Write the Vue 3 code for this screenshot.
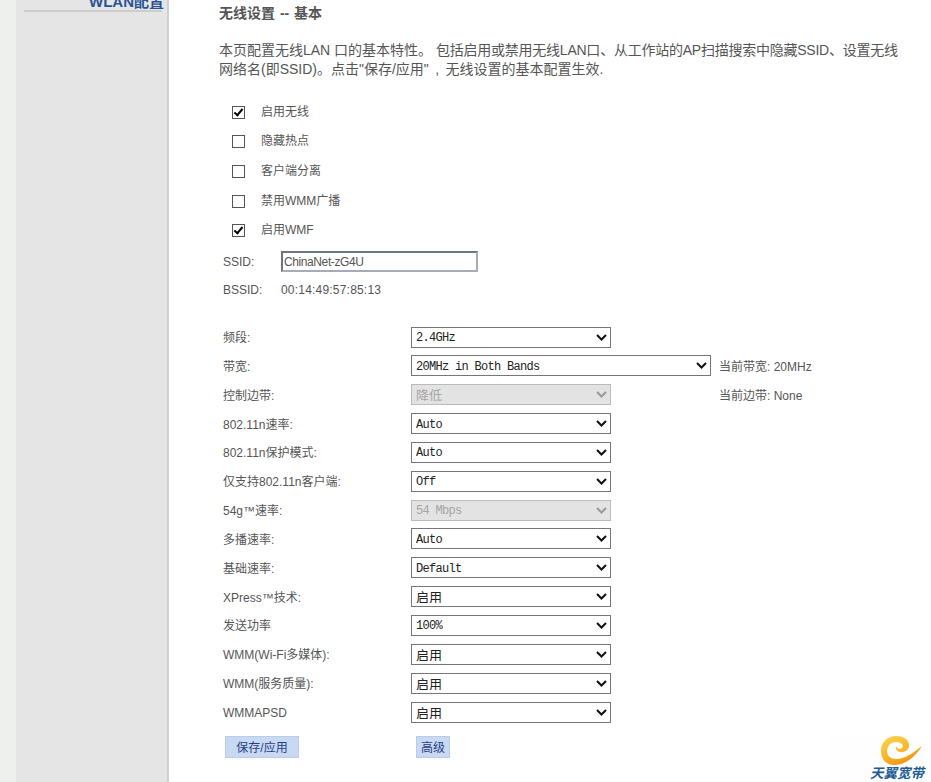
<template>
  <div class="page">
    <div class="strip"></div>
    <aside class="sidebar">
      <div class="menu-item"><span>WLAN配置</span></div>
    </aside>
    <main class="content">
      <h1 class="title">无线设置 -- 基本</h1>
      <p class="intro">
        本页配置无线LAN 口的基本特性。 <span class="tight">包括启用或禁用无线LAN口、从工作站的AP扫描搜索中隐藏SSID、设置无线</span><br /><span class="line2">网络名(即SSID)。点击"保存/应用" , 无线设置的基本配置生效.</span>
      </p>

      <div class="checks">
        <label v-for="item in checks" :key="item.label" class="check">
          <input type="checkbox" :checked="item.on" />
          <span>{{ item.label }}</span>
        </label>
      </div>

      <div class="ssid-row">
        <span class="ssid-label">SSID:</span>
        <input class="ssid-input" type="text" value="ChinaNet-zG4U" />
      </div>
      <div class="bssid-row">
        <span class="ssid-label">BSSID:</span>
        <span class="mac">00:14:49:57:85:13</span>
      </div>

      <div class="form">
        <div v-for="row in rows" :key="row.label" class="form-row">
          <span class="form-label">{{ row.label }}</span>
          <select class="sel" :class="selClass(row)" :disabled="row.disabled">
            <option>{{ row.value }}</option>
          </select>
          <span v-if="row.note" class="note">{{ row.note }}</span>
        </div>
      </div>

      <div class="actions">
        <button class="btn save">保存/应用</button>
        <button class="btn adv">高级</button>
      </div>
    </main>

    <div class="logo">
      <svg width="42" height="30" viewBox="0 0 42 30">
        <defs>
          <linearGradient id="sw" x1="0" y1="0" x2="0.6" y2="1">
            <stop offset="0" stop-color="#fcd54e" />
            <stop offset="0.6" stop-color="#f8b52a" />
            <stop offset="1" stop-color="#ee9010" />
          </linearGradient>
        </defs>
        <path fill="url(#sw)" d="M41 10C35 20 25 29 13 29C5 29 0 23 0 15C0 6 7 0 15 0C22 0 27 3 28 8C29 13 24 17 19 16C16 15.5 14 13 15 10C16 13 19 14 21 12C23 10 21 6 15 6C9 6 6 11 6 15C6 20 10 23 15 23C24 23 32 17 41 10Z" />
      </svg>
      <span class="logo-text">天翼宽带</span>
    </div>
  </div>
</template>

<script setup>
const checks = [
  { label: '启用无线', on: true },
  { label: '隐藏热点', on: false },
  { label: '客户端分离', on: false },
  { label: '禁用WMM广播', on: false },
  { label: '启用WMF', on: true }
]

const rows = [
  { label: '频段:', value: '2.4GHz' },
  { label: '带宽:', value: '20MHz in Both Bands', wide: true, note: '当前带宽: 20MHz' },
  { label: '控制边带:', value: '降低', disabled: true, note: '当前边带: None' },
  { label: '802.11n速率:', value: 'Auto' },
  { label: '802.11n保护模式:', value: 'Auto' },
  { label: '仅支持802.11n客户端:', value: 'Off' },
  { label: '54g™速率:', value: '54 Mbps', disabled: true },
  { label: '多播速率:', value: 'Auto' },
  { label: '基础速率:', value: 'Default' },
  { label: 'XPress™技术:', value: '启用' },
  { label: '发送功率', value: '100%' },
  { label: 'WMM(Wi-Fi多媒体):', value: '启用' },
  { label: 'WMM(服务质量):', value: '启用' },
  { label: 'WMMAPSD', value: '启用' }
]

// 中文选项字号要大一点
const selClass = (row) => ({
  wide: row.wide,
  cjk: /[^\x00-\x7f]/.test(row.value)
})
</script>

<style>
html,
body {
  margin: 0;
  overflow: hidden;
  background: #fff;
}
</style>

<style scoped>
.page {
  display: flex;
  height: 782px;
  width: 931px;
  position: relative;
  overflow: hidden;
  font-family: "Liberation Sans", "Noto Sans CJK SC", sans-serif;
  font-size: 12px;
  color: #555;
  background: #fff;
}

.strip {
  width: 16px;
  background: #eef0ee;
}

.sidebar {
  width: 151px;
  background: #e5e5e5;
  border-right: 2px solid #d0d0d0;
}

.menu-item {
  margin: -8px 5px 0 8px;
  height: 18px;
  line-height: 20px;
  text-align: right;
  font-size: 15px;
  font-weight: bold;
  color: #2a5295;
  border-bottom: 2px solid #ccc;
}

.menu-item span {
  margin-right: -2px;
}

.content {
  flex: 1;
  padding-left: 50px;
  min-width: 0;
}

.title {
  margin: 5px 0 0;
  height: 16px;
  line-height: 16px;
  font-size: 14px;
  font-weight: bold;
  word-spacing: 1px;
  color: #555;
}

.intro {
  margin: 20px 0 0;
  font-size: 14px;
  line-height: 19px;
  color: #555;
  white-space: nowrap;
}

.tight {
  letter-spacing: -0.24px;
}

.line2 {
  word-spacing: 2.5px;
}

.checks {
  margin-top: 23.2px;
  padding-left: 13px;
  display: flex;
  flex-direction: column;
  gap: 9.7px;
}

.check {
  display: flex;
  align-items: center;
  height: 20px;
  line-height: 18px;
}

.check span {
  margin-bottom: 1px;
}

.check input {
  appearance: none;
  position: relative;
  width: 13px;
  height: 13px;
  margin: 0 16px 0 0;
  box-sizing: border-box;
  background: #fff;
  border: 1px solid #555;
  border-radius: 0;
}

.check input:checked::after {
  content: "";
  position: absolute;
  left: 3px;
  top: 0;
  width: 3px;
  height: 7px;
  border: solid #000;
  border-width: 0 2px 2px 0;
  transform: rotate(40deg);
}

.ssid-row,
.bssid-row {
  display: flex;
  align-items: center;
  padding-left: 4px;
}

.ssid-row {
  margin-top: 9.6px;
  height: 22px;
}

.bssid-row {
  margin-top: 7px;
  height: 20px;
}

.ssid-label {
  width: 58px;
}

.mac {
  letter-spacing: 0.2px;
}

.ssid-input {
  width: 197px;
  height: 21px;
  box-sizing: border-box;
  padding: 0 1px;
  font: inherit;
  letter-spacing: -0.4px;
  color: #555;
  border: 2px solid #6e7480;
  border-right-color: #a5abb8;
  border-bottom-color: #a5abb8;
  background: #fff;
  outline: none;
}

.form {
  margin-top: 27px;
  display: flex;
  flex-direction: column;
  gap: 7.85px;
}

.form-row {
  display: grid;
  grid-template-columns: 188px 300px auto;
  align-items: center;
  height: 21px;
  padding-left: 4px;
}

.form-label {
  line-height: 18px;
  margin-top: 2px;
}

.sel {
  appearance: none;
  width: 200px;
  height: 21px;
  box-sizing: border-box;
  font-family: "Liberation Mono", "Noto Sans CJK SC", monospace;
  font-size: 12px;
  letter-spacing: -0.7px;
  color: #222;
  border: 1px solid #767676;
  border-radius: 0;
  padding: 2px 0 0 4px;
  background: #fff url("data:image/svg+xml,%3Csvg xmlns='http://www.w3.org/2000/svg' width='11' height='7'%3E%3Cpath d='M1 1l4.5 4.5L10 1' fill='none' stroke='%23111' stroke-width='2'/%3E%3C/svg%3E") no-repeat right 3px center;
}

.sel.wide {
  width: 300px;
}

.sel.cjk {
  font-family: "Noto Sans CJK SC", sans-serif;
  font-size: 13px;
  letter-spacing: 0;
  padding-top: 0;
  padding-bottom: 3px;
}

.sel:disabled {
  border-color: #bbb;
  color: #a5a5a5;
  opacity: 1;
  background: #e3e3e3 url("data:image/svg+xml,%3Csvg xmlns='http://www.w3.org/2000/svg' width='11' height='7'%3E%3Cpath d='M1 1l4.5 4.5L10 1' fill='none' stroke='%23999' stroke-width='2'/%3E%3C/svg%3E") no-repeat right 3px center;
}

.note {
  margin-left: 8px;
  margin-top: 2px;
  line-height: 18px;
}

.actions {
  display: flex;
  margin-top: 13px;
  padding-left: 6px;
}

.btn {
  height: 22px;
  padding: 0;
  box-sizing: border-box;
  font-family: "Liberation Sans", "Noto Sans CJK SC", sans-serif;
  font-size: 12px;
  color: #1f3f86;
  background: #c9d9f2;
  border: 1px solid #b8cdea;
}

.save {
  width: 74px;
}

.adv {
  width: 34px;
  margin-left: 117px;
}

.logo {
  position: absolute;
  right: 0;
  bottom: 0;
  width: 102px;
  height: 46px;
  background: #fdfefd;
  display: flex;
  flex-direction: column;
  align-items: flex-end;
  box-sizing: border-box;
}

.logo svg {
  margin-right: 8px;
}

.logo-text {
  margin-top: 1px;
  margin-right: 7px;
  font-size: 13.5px;
  font-weight: bold;
  font-style: italic;
  line-height: 14px;
  color: #1f5c96;
}
</style>
